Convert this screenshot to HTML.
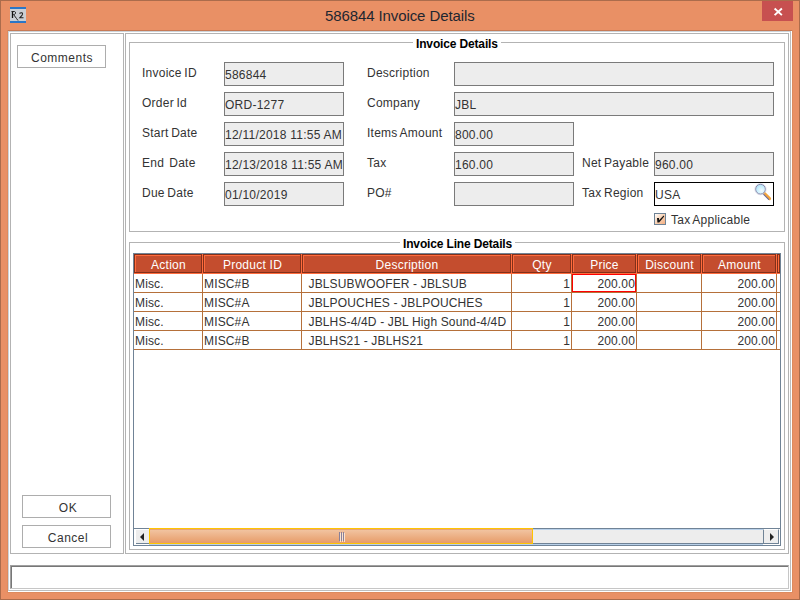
<!DOCTYPE html>
<html><head><meta charset="utf-8">
<style>
*{margin:0;padding:0;box-sizing:border-box}
html,body{width:800px;height:600px;overflow:hidden}
body{position:relative;background:#E99065;font-family:"Liberation Sans",sans-serif;font-size:12px;color:#222;letter-spacing:0.25px}
.a{position:absolute}
.bx{position:absolute;border:1px solid #B3B3B3}
.t{position:absolute;white-space:pre;line-height:14px}
.btn{position:absolute;border:1px solid #ADADAD;background:#fff;text-align:center;line-height:25px;color:#333;letter-spacing:0.5px;text-indent:1px}
.fld{position:absolute;border:1px solid #7A7A7A;background:#EDEDED;width:120px;height:24px;line-height:24px;padding-left:0px;white-space:pre;color:#333}
.lbl{position:absolute;white-space:pre;line-height:14px;color:#333;word-spacing:-1px}
.grp{position:absolute;border:1px solid #B3B3B3}
.gt{position:absolute;font-weight:bold;background:#fff;color:#000;line-height:14px;white-space:pre;padding:0 3px;letter-spacing:-0.15px}
.hc{position:absolute;top:254px;height:19px;background:#C44D2E;border:1px solid #82301A;color:#fff;text-align:center;line-height:20px;text-indent:1px}
.hc:before{content:"";position:absolute;left:0;top:0;right:0;bottom:0;border-left:1px solid #FF6B3D;border-top:1px solid #FF6B3D}
.row{position:absolute;left:134px;width:646px;height:19px;border-bottom:1px solid #B5703A}
.c{position:absolute;top:0;height:18px;line-height:20px;letter-spacing:0.15px;white-space:pre;color:#333}
.vl{position:absolute;top:274px;width:1px;height:76px;background:#B5703A}
</style></head><body>
<!-- frame darker edges -->
<div class="a" style="left:0;top:0;width:800px;height:1px;background:#AB6C4C"></div>
<div class="a" style="left:0;top:0;width:1px;height:600px;background:#AB6C4C"></div>
<div class="a" style="left:799px;top:0;width:1px;height:600px;background:#AB6C4C"></div>
<div class="a" style="left:0;top:599px;width:800px;height:1px;background:#AB6C4C"></div>
<div class="a" style="left:8px;top:30px;width:784px;height:1px;background:#C67A56"></div>
<!-- icon -->
<div class="a" style="left:10px;top:7px;width:16px;height:16px;background:#CBCFD4;border-top:2px solid #2A76C6;border-bottom:2px solid #2A76C6"></div>
<svg class="a" style="left:10px;top:7px" width="16" height="16" viewBox="0 0 16 16">
<path d="M2.5 4.5 L2.5 11" stroke="#111" stroke-width="1.3" fill="none"/>
<path d="M1.5 4.5 L4.5 4.5 Q6 5 5.5 6.5 Q5 7.5 3.5 7.5 L6.5 11.5 L8 13.5" stroke="#222" stroke-width="1" fill="none"/>
<path d="M9.5 6.5 Q10.5 5.5 12 5.8 Q13 6.5 12.2 8 L9.8 10.8 L13.5 10.8" stroke="#222" stroke-width="1.1" fill="none"/>
</svg>
<!-- title -->
<div class="t" style="left:325px;top:7px;font-size:15px;line-height:18px;color:#1E2630;letter-spacing:-0.1px">586844 Invoice Details</div>
<!-- close -->
<div class="a" style="left:762px;top:1px;width:31px;height:20px;background:#C75050"></div>
<svg class="a" style="left:773px;top:7px" width="11" height="10" viewBox="0 0 11 10"><path d="M1.6 1.5 L8.9 8.1 M8.9 1.5 L1.6 8.1" stroke="#fff" stroke-width="1.9"/></svg>

<!-- client -->
<div class="a" style="left:8px;top:31px;width:784px;height:561px;background:#fff"></div>
<div class="a" style="left:8px;top:31px;width:783px;height:560px;border:1px solid #CDD3D8;border-right-color:#BDBDBD;border-bottom-color:#BDBDBD"></div>
<div class="a" style="left:792px;top:30px;width:1px;height:563px;background:#DD8A5E"></div>
<div class="a" style="left:7px;top:592px;width:786px;height:1px;background:#DD8A5E"></div>
<div class="a" style="left:7px;top:30px;width:1px;height:563px;background:#DD8A5E"></div>

<!-- left panel -->
<div class="bx" style="left:10px;top:33px;width:114px;height:521px"></div>
<div class="btn" style="left:17px;top:45px;width:89px;height:23px">Comments</div>
<div class="btn" style="left:22px;top:495px;width:89px;height:23px;padding-left:2px">OK</div>
<div class="btn" style="left:22px;top:525px;width:89px;height:23px;padding-left:2px">Cancel</div>

<!-- right panel -->
<div class="bx" style="left:125px;top:33px;width:664px;height:521px"></div>

<!-- group 1 -->
<div class="grp" style="left:129px;top:42px;width:656px;height:190px"></div>
<div class="gt" style="left:413px;top:37px">Invoice Details</div>

<div class="lbl" style="left:142px;top:66px">Invoice ID</div>
<div class="lbl" style="left:142px;top:96px">Order Id</div>
<div class="lbl" style="left:142px;top:126px">Start Date</div>
<div class="lbl" style="left:142px;top:156px">End  Date</div>
<div class="lbl" style="left:142px;top:186px">Due Date</div>

<div class="fld" style="left:224px;top:62px">586844</div>
<div class="fld" style="left:224px;top:92px">ORD-1277</div>
<div class="fld" style="left:224px;top:122px">12/11/2018 11:55 AM</div>
<div class="fld" style="left:224px;top:152px">12/13/2018 11:55 AM</div>
<div class="fld" style="left:224px;top:182px">01/10/2019</div>

<div class="lbl" style="left:367px;top:66px">Description</div>
<div class="lbl" style="left:367px;top:96px">Company</div>
<div class="lbl" style="left:367px;top:126px">Items Amount</div>
<div class="lbl" style="left:367px;top:156px">Tax</div>
<div class="lbl" style="left:367px;top:186px">PO#</div>

<div class="fld" style="left:454px;top:62px;width:320px"></div>
<div class="fld" style="left:454px;top:92px;width:320px">JBL</div>
<div class="fld" style="left:454px;top:122px">800.00</div>
<div class="fld" style="left:454px;top:152px">160.00</div>
<div class="fld" style="left:454px;top:182px"></div>

<div class="lbl" style="left:582px;top:156px">Net Payable</div>
<div class="lbl" style="left:582px;top:186px">Tax Region</div>
<div class="fld" style="left:654px;top:152px">960.00</div>
<div class="fld" style="left:654px;top:182px;background:#fff;border-color:#000">USA</div>
<!-- magnifier -->
<svg class="a" style="left:752px;top:182px" width="22" height="22" viewBox="0 0 22 22">
<defs><radialGradient id="lg" cx="0.6" cy="0.65" r="0.7"><stop offset="0" stop-color="#F4FCFF"/><stop offset="0.6" stop-color="#C9EEFC"/><stop offset="1" stop-color="#A6DCF4"/></radialGradient></defs>
<line x1="12.3" y1="11.3" x2="17.6" y2="16.6" stroke="#F3A43C" stroke-width="3" stroke-linecap="round"/>
<line x1="11.6" y1="12.4" x2="16.6" y2="17.4" stroke="#6C6C9C" stroke-width="1.1" stroke-linecap="round"/>
<circle cx="8.5" cy="7.2" r="4.9" fill="url(#lg)" stroke="#8585A8" stroke-width="1"/>
<circle cx="8.5" cy="7.2" r="5.6" fill="none" stroke="#C9C9DC" stroke-width="0.6"/>
</svg>
<!-- checkbox -->
<div class="a" style="left:654px;top:213px;width:12px;height:12px;border:1px solid #6E8295;background:linear-gradient(135deg,#fff 0%,#F8D2B5 50%,#F4AE80 100%)"></div>
<svg class="a" style="left:655px;top:214px" width="10" height="10" viewBox="0 0 10 10"><path d="M2 4 L4 4 L4 6.2 L8.6 1.6 L9.2 2.4 L4.2 8.6 L2.4 8.6 Z" fill="#151515"/></svg>
<div class="lbl" style="left:671px;top:213px">Tax Applicable</div>

<!-- group 2 -->
<div class="grp" style="left:129px;top:242px;width:656px;height:308px"></div>
<div class="gt" style="left:400px;top:237px">Invoice Line Details</div>

<!-- table -->
<div class="a" style="left:133px;top:253px;width:648px;height:293px;border:1px solid #708396;background:#fff"></div>
<div class="a" style="left:134px;top:254px;width:646px;height:20px;background:#FF6B3D"></div>
<div class="hc" style="left:134px;width:68px">Action</div>
<div class="hc" style="left:203px;width:98px">Product ID</div>
<div class="hc" style="left:302px;width:209px">Description</div>
<div class="hc" style="left:512px;width:59px">Qty</div>
<div class="hc" style="left:572px;width:64px">Price</div>
<div class="hc" style="left:637px;width:64px">Discount</div>
<div class="hc" style="left:702px;width:74px">Amount</div>
<div class="hc" style="left:777px;width:3px"></div>

<div class="vl" style="left:202px"></div>
<div class="vl" style="left:301px"></div>
<div class="vl" style="left:511px"></div>
<div class="vl" style="left:571px"></div>
<div class="vl" style="left:636px"></div>
<div class="vl" style="left:701px"></div>
<div class="vl" style="left:776px"></div>

<div class="row" style="top:274px">
<div class="c" style="left:1px">Misc.</div><div class="c" style="left:70px">MISC#B</div><div class="c" style="left:171px"> JBLSUBWOOFER - JBLSUB</div>
<div class="c" style="left:380px;width:56px;text-align:right">1</div>
<div class="c" style="left:438px;width:64px;height:18px;border:1px solid #FF0000;text-align:right;line-height:18px;padding-right:0px">200.00</div>
<div class="c" style="left:568px;width:73px;text-align:right">200.00</div>
</div>
<div class="row" style="top:293px">
<div class="c" style="left:1px">Misc.</div><div class="c" style="left:70px">MISC#A</div><div class="c" style="left:171px"> JBLPOUCHES - JBLPOUCHES</div>
<div class="c" style="left:380px;width:56px;text-align:right">1</div>
<div class="c" style="left:438px;width:64px;text-align:right;padding-right:1px">200.00</div>
<div class="c" style="left:568px;width:73px;text-align:right">200.00</div>
</div>
<div class="row" style="top:312px">
<div class="c" style="left:1px">Misc.</div><div class="c" style="left:70px">MISC#A</div><div class="c" style="left:171px"> JBLHS-4/4D - JBL High Sound-4/4D</div>
<div class="c" style="left:380px;width:56px;text-align:right">1</div>
<div class="c" style="left:438px;width:64px;text-align:right;padding-right:1px">200.00</div>
<div class="c" style="left:568px;width:73px;text-align:right">200.00</div>
</div>
<div class="row" style="top:331px">
<div class="c" style="left:1px">Misc.</div><div class="c" style="left:70px">MISC#B</div><div class="c" style="left:171px"> JBLHS21 - JBLHS21</div>
<div class="c" style="left:380px;width:56px;text-align:right">1</div>
<div class="c" style="left:438px;width:64px;text-align:right;padding-right:1px">200.00</div>
<div class="c" style="left:568px;width:73px;text-align:right">200.00</div>
</div>

<!-- scrollbar -->
<div class="a" style="left:134px;top:528px;width:646px;height:17px;background:#fff;border-top:1px solid #708396"></div>
<div class="a" style="left:149px;top:529px;width:614px;height:16px;background:#EDEDED;border-top:1px solid #B9D1EA;border-bottom:1px solid #B9D1EA"></div>
<div class="a" style="left:149px;top:543px;width:614px;height:1px;background:#708396"></div>
<div class="a" style="left:136px;top:530px;width:13px;height:14px;background:#EDEDED;border-bottom:1px solid #708396"></div>
<svg class="a" style="left:139px;top:532px" width="6" height="10" viewBox="0 0 6 10"><path d="M5 1 L1 5 L5 9 Z" fill="#222"/></svg>
<div class="a" style="left:763px;top:529px;width:16px;height:15px;background:#EEEEEE;border:1px solid #708396;border-top:1px solid #fff"></div>
<svg class="a" style="left:769px;top:532px" width="6" height="10" viewBox="0 0 6 10"><path d="M1 1 L5 5 L1 9 Z" fill="#222"/></svg>
<div class="a" style="left:149px;top:528px;width:384px;height:16px;border:1px solid #FFC400;background:linear-gradient(#E8A275 0,#E8A275 1px,#F1C3A0 1px,#E79C69 100%)"></div>
<div class="a" style="left:339px;top:532px;width:5px;height:9px;background:repeating-linear-gradient(90deg,#888099 0 1px,transparent 1px 2px)"></div>
<div class="a" style="left:340px;top:533px;width:5px;height:9px;background:repeating-linear-gradient(90deg,#FBE3CF 0 1px,transparent 1px 2px)"></div>

<!-- status bar -->
<div class="a" style="left:10px;top:565px;width:779px;height:24px;border:1px solid #A0A0A0;border-right-color:#C6C6C6;border-bottom-color:#C6C6C6"></div>
<div class="a" style="left:11px;top:566px;width:777px;height:22px;border-left:1px solid #777;border-top:1px solid #777"></div>
</body></html>
